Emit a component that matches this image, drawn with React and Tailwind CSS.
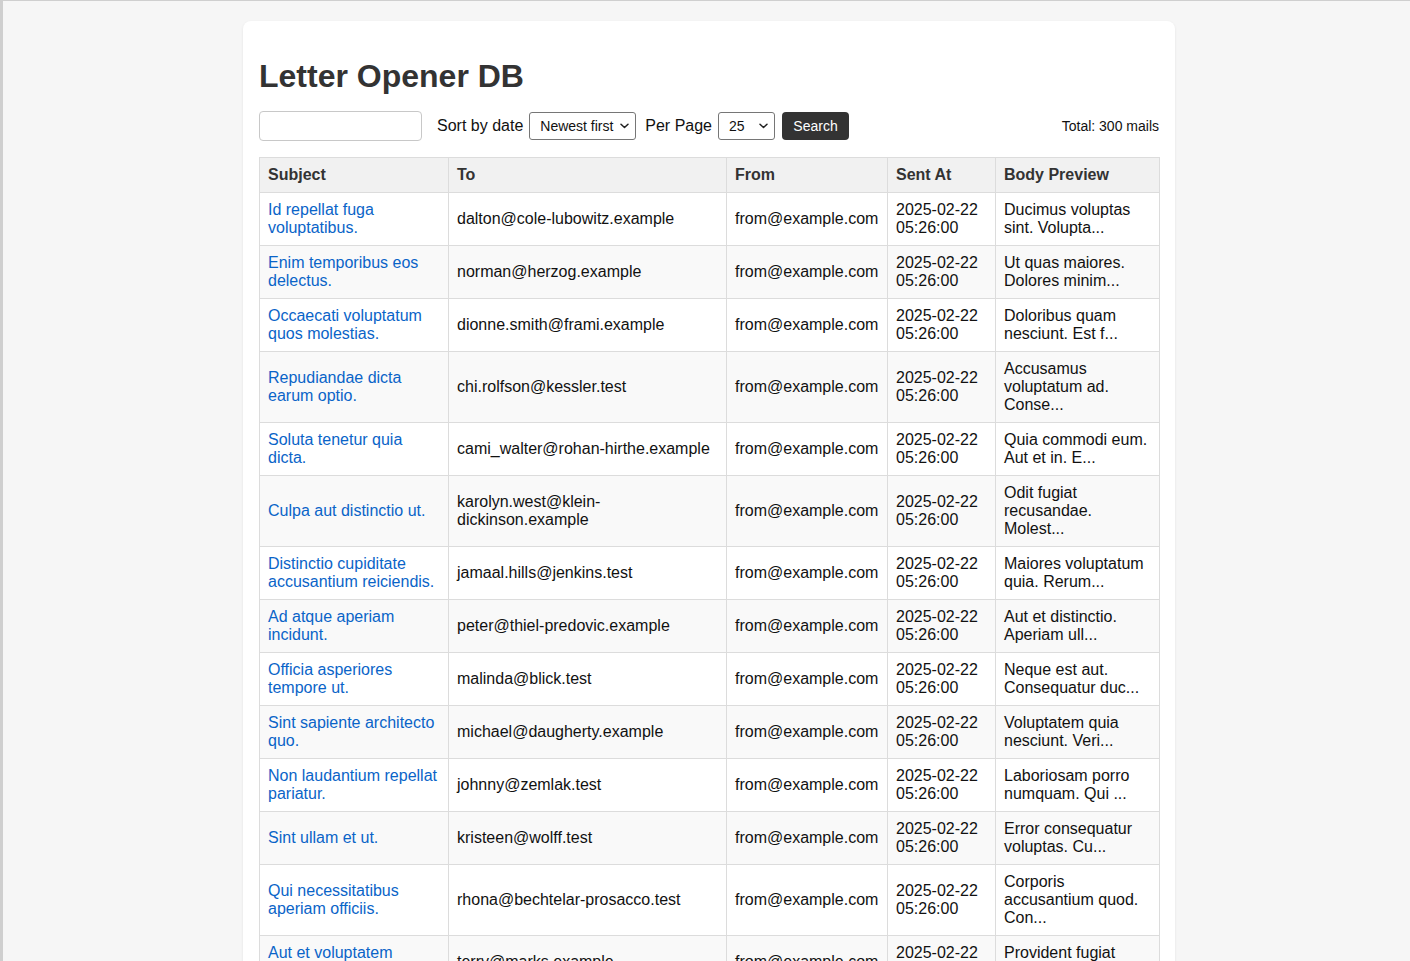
const mails = [
  ['Id repellat fuga voluptatibus.', 'dalton@cole-lubowitz.example', 'Ducimus voluptas sint. Volupta...'],
  ['Enim temporibus eos delectus.', 'norman@herzog.example', 'Ut quas maiores. Dolores minim...'],
  ['Occaecati voluptatum quos molestias.', 'dionne.smith@frami.example', 'Doloribus quam nesciunt. Est f...'],
  ['Repudiandae dicta earum optio.', 'chi.rolfson@kessler.test', 'Accusamus voluptatum ad. Conse...'],
  ['Soluta tenetur quia dicta.', 'cami_walter@rohan-hirthe.example', 'Quia commodi eum. Aut et in. E...'],
  ['Culpa aut distinctio ut.', 'karolyn.west@klein-dickinson.example', 'Odit fugiat recusandae. Molest...'],
  ['Distinctio cupiditate accusantium reiciendis.', 'jamaal.hills@jenkins.test', 'Maiores voluptatum quia. Rerum...'],
  ['Ad atque aperiam incidunt.', 'peter@thiel-predovic.example', 'Aut et distinctio. Aperiam ull...'],
  ['Officia asperiores tempore ut.', 'malinda@blick.test', 'Neque est aut. Consequatur duc...'],
  ['Sint sapiente architecto quo.', 'michael@daugherty.example', 'Voluptatem quia nesciunt. Veri...'],
  ['Non laudantium repellat pariatur.', 'johnny@zemlak.test', 'Laboriosam porro numquam. Qui ...'],
  ['Sint ullam et ut.', 'kristeen@wolff.test', 'Error consequatur voluptas. Cu...'],
  ['Qui necessitatibus aperiam officiis.', 'rhona@bechtelar-prosacco.test', 'Corporis accusantium quod. Con...'],
  ['Aut et voluptatem dolores.', 'terry@marks.example', 'Provident fugiat quia. Sed ...'],
];

function Chevron() {
  return (
    <svg
      className="pointer-events-none absolute right-[7px] top-1/2 -translate-y-1/2"
      width="9"
      height="6"
      viewBox="0 0 9 6"
      fill="none"
    >
      <path d="M1 1.2l3.5 3.3L8 1.2" stroke="#222" strokeWidth="1.5" strokeLinecap="round" strokeLinejoin="round" />
    </svg>
  );
}

function Select({ width, children }) {
  return (
    <div className="relative" style={{ width }}>
      <select className="h-[28px] w-full appearance-none rounded-[3px] border border-[#767676] bg-white pl-[10px] text-[14px] text-[#111]">
        {children}
      </select>
      <Chevron />
    </div>
  );
}

export default function App() {
  return (
    <div
      className="min-h-screen border-l-[3px] border-t border-[#cfcfcf] bg-[#f6f6f6] pt-[20px] text-[16px] leading-[18px] text-[#111]"
      style={{ fontFamily: '"Liberation Sans", Arial, Helvetica, sans-serif' }}
    >
      <div className="ml-[240px] w-[932px] rounded-[8px] bg-white p-[16px] shadow-[0_1px_3px_rgba(0,0,0,0.08)]">
        <h1 className="mb-[16px] mt-[21px] text-[32px] font-bold leading-[37px] text-[#333]">Letter Opener DB</h1>

        <div className="flex items-center justify-between">
          <div className="flex items-center">
            <input className="h-[30px] w-[163px] rounded-[4px] border border-[#c8c8c8] bg-white px-2" />
            <span className="ml-[15px]">Sort by date</span>
            <div className="ml-[6px]">
              <Select width={107}>
                <option>Newest first</option>
                <option>Oldest first</option>
              </Select>
            </div>
            <span className="ml-[9px]">Per Page</span>
            <div className="ml-[6px]">
              <Select width={57}>
                <option>25</option>
                <option>50</option>
                <option>100</option>
              </Select>
            </div>
            <button className="ml-[7px] h-[28px] w-[67px] rounded-[4px] bg-[#333] text-[14px] text-white">Search</button>
          </div>
          <span className="text-[14px]">Total: 300 mails</span>
        </div>

        <table className="mt-[16px] w-[900px] table-fixed border-collapse">
          <colgroup>
            <col className="w-[189px]" />
            <col className="w-[278px]" />
            <col className="w-[161px]" />
            <col className="w-[108px]" />
            <col className="w-[164px]" />
          </colgroup>
          <thead>
            <tr className="bg-[#f1f1f1] text-left text-[#333]">
              {['Subject', 'To', 'From', 'Sent At', 'Body Preview'].map((h) => (
                <th key={h} className="border border-[#dcdcdc] p-[8px] font-bold">
                  {h}
                </th>
              ))}
            </tr>
          </thead>
          <tbody>
            {mails.map(([subject, to, preview], i) => (
              <tr key={i} className="even:bg-[#f9f9f9]">
                <td className="border border-[#dcdcdc] p-[8px] align-middle">
                  <a href="#" className="text-[#0a64c8]">{subject}</a>
                </td>
                <td className="border border-[#dcdcdc] p-[8px] align-middle">{to}</td>
                <td className="border border-[#dcdcdc] p-[8px] align-middle">from@example.com</td>
                <td className="border border-[#dcdcdc] p-[8px] align-middle">2025-02-22 05:26:00</td>
                <td className="border border-[#dcdcdc] p-[8px] align-middle">{preview}</td>
              </tr>
            ))}
          </tbody>
        </table>
      </div>
    </div>
  );
}
